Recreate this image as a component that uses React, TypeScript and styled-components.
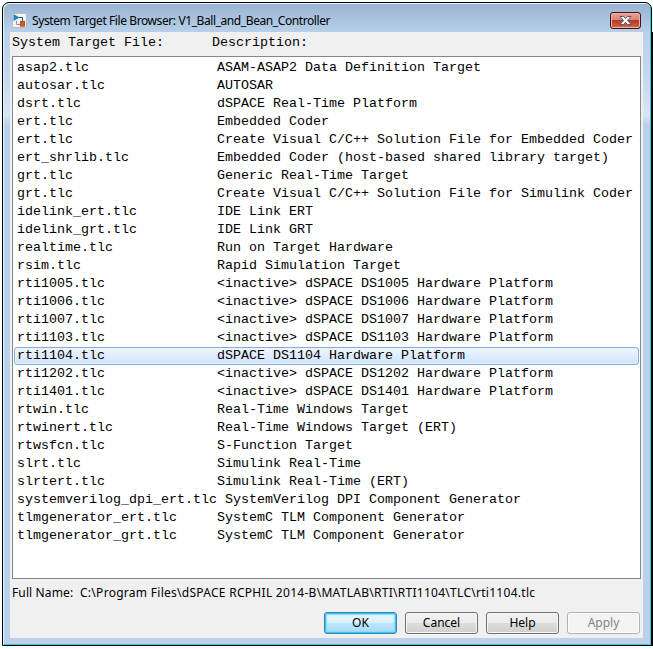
import React from "react";
import styled, { createGlobalStyle, css } from "styled-components";

const Global = createGlobalStyle`
  *{box-sizing:border-box}
  body{margin:0;background:#fff;color:#000;overflow:hidden}
`;
const Desktop = styled.div`
  width:653px;height:649px;padding:2px 1px 3px 2px;
  background:linear-gradient(#fff 32px,#000 32px 646px,#fff 646px) right / 2px 100% no-repeat,#fff;
`;
const Window = styled.section`
  height:644px;display:flex;flex-direction:column;
  border:1px solid #000;border-radius:7px 7px 0 0;
  padding:1px 8px 7px 7px;
  background:linear-gradient(#98b4d2,#b9d1ea 30px,#c3d8ee 70px,#d8e6f4 112px,#b9d1ea 122px);
  box-shadow:inset 1px 1px 0 #e8f4fc,inset -1px -1px 0 #25d0e6;
`;
const TitleBar = styled.header`
  height:28px;flex:none;display:flex;align-items:center;padding:5px 2px 0 2px;
`;
const Title = styled.h1<{ $spacing: number }>`
  margin:0 0 0 5px;flex:1;white-space:nowrap;
  font:400 12px/18px "Noto Sans","Open Sans",sans-serif;letter-spacing:${p => p.$spacing}px;
`;
const CloseButton = styled.button`
  width:31px;height:17px;padding:0;margin-top:0;display:grid;place-items:center;
  border:1px solid #43131d;border-radius:3px;
  background:linear-gradient(#e5a193,#d98576 48%,#b93825 50%,#cf694b);
  box-shadow:inset 0 0 0 1px #eab5a8;
`;
const Client = styled.main`
  flex:1;min-height:0;display:flex;flex-direction:column;background:#f0f0f0;padding:0 2px;
`;
const mono = css`font-family:"Liberation Mono","Courier New",monospace;font-size:13.33px;white-space:pre;`;
const Headings = styled.div`
  ${mono} display:grid;grid-template-columns:200px 1fr;height:24px;flex:none;line-height:22px;
`;
const List = styled.ul`
  margin:0;padding:2px 1px;list-style:none;height:523px;flex:none;border:1px solid #828790;background:#fff;
`;
const Row = styled.li<{ $selected: boolean }>`
  ${mono} display:flex;height:18px;line-height:16px;padding:0 2px;border:1px solid transparent;border-radius:3px;
  ${p => p.$selected && css`border-color:#84acdd;background:linear-gradient(#f0f6fe,#cfe3fd);box-shadow:inset 0 0 0 1px #e9f3ff;`}
`;
const FileName = styled.span`min-width:200px;flex:none;`;
const FullName = styled.div`
  display:flex;height:33px;padding-top:6px;font:12px/16px "Noto Sans",sans-serif;
  white-space:nowrap;flex:none;
`;
const Label = styled.span`width:68px;letter-spacing:.12px;`;
const PathText = styled.span`letter-spacing:.28px;`;
const Actions = styled.footer`display:flex;justify-content:flex-end;gap:8px;padding-right:1px;`;
const Action = styled.button<{ $primary?: boolean }>`
  width:73px;height:22px;padding:0;border:1px solid #707070;border-radius:3px;color:#000;
  font:12px/18px "Noto Sans",sans-serif;
  background:linear-gradient(#f2f2f2,#ebebeb 48%,#dddddd 50%,#cfcfcf);box-shadow:inset 0 0 0 1px #f8f8f8;
  ${p => p.$primary && css`border-color:#3c7fb1;background:linear-gradient(#e9f6fd,#d9f0fc 48%,#bee6fd 50%,#a7d9f5);box-shadow:inset 0 0 0 1px #33c9f4,inset 0 0 1px 2px #8addf8;`}
  &:disabled{color:#838383;border-color:#adb2b5;background:#f4f4f4;box-shadow:inset 0 0 0 1px #fbfbfb;}
`;
const rows: [string, string][] = [
  ["asap2.tlc", "ASAM-ASAP2 Data Definition Target"],
  ["autosar.tlc", "AUTOSAR"],
  ["dsrt.tlc", "dSPACE Real-Time Platform"],
  ["ert.tlc", "Embedded Coder"],
  ["ert.tlc", "Create Visual C/C++ Solution File for Embedded Coder"],
  ["ert_shrlib.tlc", "Embedded Coder (host-based shared library target)"],
  ["grt.tlc", "Generic Real-Time Target"],
  ["grt.tlc", "Create Visual C/C++ Solution File for Simulink Coder"],
  ["idelink_ert.tlc", "IDE Link ERT"],
  ["idelink_grt.tlc", "IDE Link GRT"],
  ["realtime.tlc", "Run on Target Hardware"],
  ["rsim.tlc", "Rapid Simulation Target"],
  ["rti1005.tlc", "<inactive> dSPACE DS1005 Hardware Platform"],
  ["rti1006.tlc", "<inactive> dSPACE DS1006 Hardware Platform"],
  ["rti1007.tlc", "<inactive> dSPACE DS1007 Hardware Platform"],
  ["rti1103.tlc", "<inactive> dSPACE DS1103 Hardware Platform"],
  ["rti1104.tlc", "dSPACE DS1104 Hardware Platform"],
  ["rti1202.tlc", "<inactive> dSPACE DS1202 Hardware Platform"],
  ["rti1401.tlc", "<inactive> dSPACE DS1401 Hardware Platform"],
  ["rtwin.tlc", "Real-Time Windows Target"],
  ["rtwinert.tlc", "Real-Time Windows Target (ERT)"],
  ["rtwsfcn.tlc", "S-Function Target"],
  ["slrt.tlc", "Simulink Real-Time"],
  ["slrtert.tlc", "Simulink Real-Time (ERT)"],
  ["systemverilog_dpi_ert.tlc ", "SystemVerilog DPI Component Generator"],
  ["tlmgenerator_ert.tlc", "SystemC TLM Component Generator"],
  ["tlmgenerator_grt.tlc", "SystemC TLM Component Generator"],
];

function ModelIcon() {
  return (
    <svg width="15" height="15" viewBox="0 0 15 15">
      <path d="M.5.5h14v14H.5z" fill="#f3f3f3" stroke="#b4bcc4" />
      <path d="M7 4.500h3.500V8" fill="none" stroke="#424b55" />
      <path d="M8 11.500H4.500V8" fill="none" stroke="#8a9199" />
      <path d="M1.500 1l6 3.500-6 3.500z" fill="#1687bd" />
      <path d="M8 8h5v5.500H8z" fill="#d9572e" />
      <path d="M8.500 8.500h4v4.500h-4z" fill="none" stroke="#b84b2a" />
    </svg>
  );
}
function CloseIcon() {
  return (
    <svg width="13" height="11" viewBox="0 0 13 11">
      <path d="M1 1.500h3.500l2 2 2-2H12L8.500 5.500 12 9.500H8.500l-2-2-2 2H1l3.500-4z" fill="#fff" stroke="#555d70" />
    </svg>
  );
}
export default function App() {
  return (
    <Desktop>
      <Global />
      <Window>
        <TitleBar>
          <ModelIcon />
          <Title $spacing={-0.41}>System Target File Browser: V1_Ball_and_Bean_Controller</Title>
          <CloseButton aria-label="Close"><CloseIcon /></CloseButton>
        </TitleBar>
        <Client>
          <Headings><span>System Target File:</span><span>Description:</span></Headings>
          <List>
            {rows.map(([file, description], i) => (
              <Row key={i} $selected={file === "rti1104.tlc"}>
                <FileName>{file}</FileName><span>{description}</span>
              </Row>
            ))}
          </List>
          <FullName>
            <Label>Full Name:</Label>
            <PathText>C:\Program Files\dSPACE RCPHIL 2014-B\MATLAB\RTI\RTI1104\TLC\rti1104.tlc</PathText>
          </FullName>
          <Actions>
            <Action $primary>OK</Action><Action>Cancel</Action><Action>Help</Action><Action disabled>Apply</Action>
          </Actions>
        </Client>
      </Window>
    </Desktop>
  );
}
